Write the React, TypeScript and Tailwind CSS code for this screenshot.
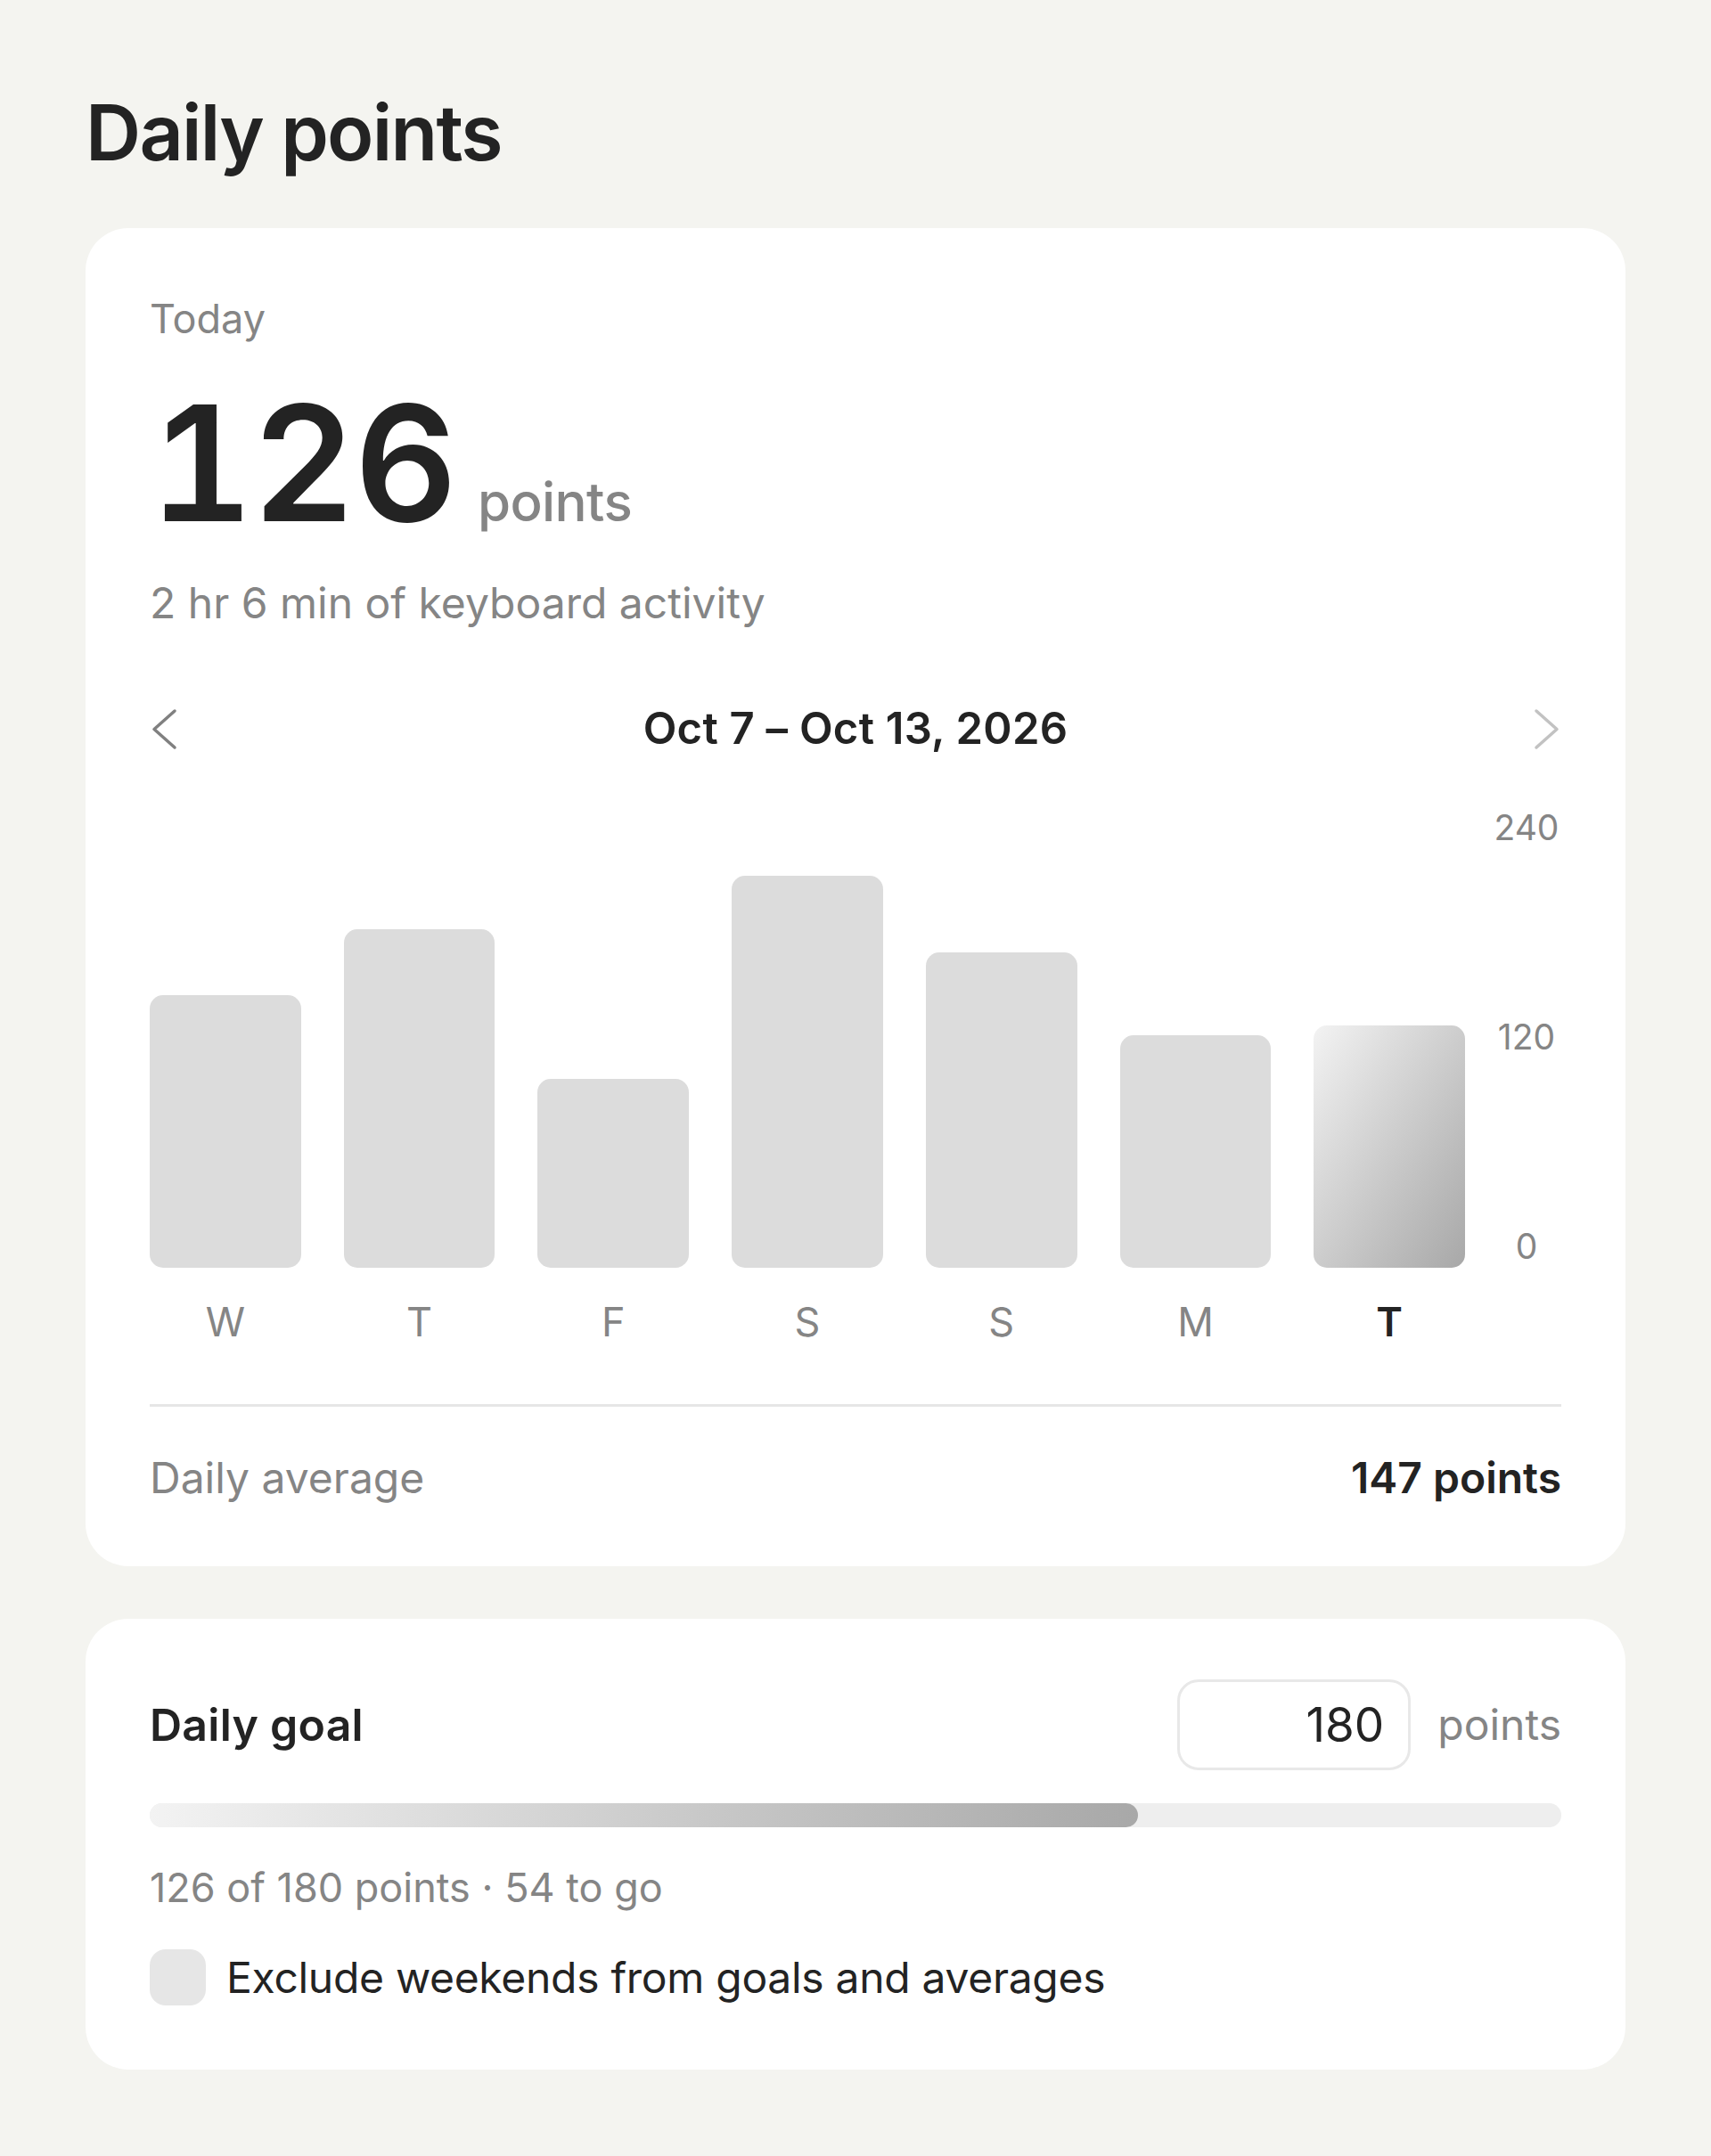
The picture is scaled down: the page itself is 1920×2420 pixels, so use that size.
import React from "react";

type Day = { label: string; value: number; today?: boolean };

const WEEK: Day[] = [
  { label: "W", value: 142 },
  { label: "T", value: 176 },
  { label: "F", value: 98 },
  { label: "S", value: 204 },
  { label: "S", value: 164 },
  { label: "M", value: 121 },
  { label: "T", value: 126, today: true },
];

const MAX = 240;
const CHART_H = 518;

function ChevronLeft() {
  return (
    <svg width="32" height="48" viewBox="0 0 32 48" fill="none">
      <polyline
        points="28,4 5,24.5 28,45"
        stroke="#808080"
        strokeWidth="3.5"
        strokeLinecap="round"
        strokeLinejoin="round"
      />
    </svg>
  );
}

function ChevronRight() {
  return (
    <svg width="32" height="48" viewBox="0 0 32 48" fill="none">
      <polyline
        points="4,4 27,24.5 4,45"
        stroke="#c2c2c2"
        strokeWidth="3.5"
        strokeLinecap="round"
        strokeLinejoin="round"
      />
    </svg>
  );
}

export default function App() {
  const average = Math.round(WEEK.reduce((s, d) => s + d.value, 0) / WEEK.length);
  const today = 126;
  const goal = 180;
  const pct = (today / goal) * 100;

  return (
    <div className="min-h-screen bg-[#f4f4f0] px-[96px] pt-[106px] pb-[97px] font-[family-name:Inter,sans-serif] text-[#232323]">
      <h1 className="text-[86px] leading-[86px] font-semibold tracking-[-0.02em]">Daily points</h1>

      {/* Today summary + weekly chart */}
      <section className="mt-[64px] rounded-[48px] bg-white px-[72px] pt-[69px] pb-[70px]">
        <div className="text-[45px] leading-[66px] text-[#858585]">Today</div>

        <div className="mt-[39px] flex items-baseline">
          <span className="text-[180px] leading-[180px] font-semibold tabular-nums tracking-[-0.01em]">126</span>
          <span className="ml-[24px] text-[60px] leading-none font-medium text-[#858585] tracking-[-0.01em]">points</span>
        </div>

        <div className="mt-[38px] text-[48px] leading-[58px] text-[#858585]">2 hr 6 min of keyboard activity</div>

        <div className="mt-[82px] flex h-[60px] items-center justify-between">
          <button className="flex h-[48px] w-[32px] items-center justify-center">
            <ChevronLeft />
          </button>
          <div className="text-[49px] leading-[58px] font-semibold tracking-[0.005em]">Oct 7 – Oct 13, 2026</div>
          <button className="flex h-[48px] w-[32px] items-center justify-center">
            <ChevronRight />
          </button>
        </div>

        <div className="mt-[57px] flex h-[518px]">
          <div className="flex flex-1 items-end gap-[48px]">
            {WEEK.map((d, i) => (
              <div
                key={i}
                className={
                  d.today
                    ? "flex-1 rounded-[15px] bg-linear-to-br from-[#f3f3f3] to-[#a8a8a8]"
                    : "flex-1 rounded-[15px] bg-[#dcdcdc]"
                }
                style={{ height: `${(d.value / MAX) * CHART_H}px` }}
              />
            ))}
          </div>
          <div className="ml-[30px] flex w-[78px] flex-col justify-between text-center text-[39px] leading-[48px] text-[#858585]">
            <span>240</span>
            <span>120</span>
            <span>0</span>
          </div>
        </div>

        <div className="mt-[34px] flex">
          <div className="flex flex-1 gap-[48px]">
            {WEEK.map((d, i) => (
              <div
                key={i}
                className={
                  d.today
                    ? "flex-1 text-center text-[45px] leading-[54px] font-semibold text-[#232323]"
                    : "flex-1 text-center text-[45px] leading-[54px] text-[#858585]"
                }
              >
                {d.label}
              </div>
            ))}
          </div>
          <div className="ml-[30px] w-[78px]" />
        </div>

        <div className="mt-[65px] h-[3px] bg-[#e6e6e6]" />

        <div className="mt-[51px] flex items-center justify-between text-[48px] leading-[58px]">
          <span className="text-[#858585]">Daily average</span>
          <span className="font-semibold">{average} points</span>
        </div>
      </section>

      {/* Daily goal */}
      <section className="mt-[59px] rounded-[48px] bg-white px-[72px] pt-[68px] pb-[72px]">
        <div className="flex items-center">
          <span className="flex-1 text-[50px] leading-[58px] font-semibold tracking-[0.005em]">Daily goal</span>
          <div className="flex h-[102px] w-[262px] items-center justify-end rounded-[24px] border-[3px] border-[#e8e8e8] pr-[27px] text-[53px] leading-none">
            {goal}
          </div>
          <span className="ml-[30px] text-[48px] leading-[58px] text-[#858585]">points</span>
        </div>

        <div className="mt-[37px] h-[27px] overflow-hidden rounded-full bg-[#eeeeee]">
          <div
            className="h-full rounded-full bg-linear-to-r from-[#f3f3f3] to-[#a8a8a8]"
            style={{ width: `${pct}%` }}
          />
        </div>

        <div className="mt-[41px] text-[45px] leading-[54px] text-[#858585]">
          {today} of {goal} points · {goal - today} to go
        </div>

        <label className="mt-[42px] flex items-center">
          <span className="h-[63px] w-[63px] rounded-[18px] bg-[#e6e6e6]" />
          <span className="ml-[23px] text-[48px] leading-[58px] tracking-[-0.3px]">Exclude weekends from goals and averages</span>
        </label>
      </section>
    </div>
  );
}
